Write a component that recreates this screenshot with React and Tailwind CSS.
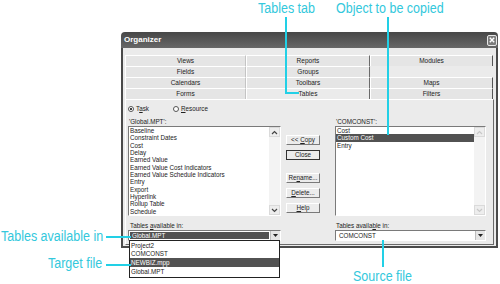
import React from 'react'

const TAB_ROWS = [
  ['Views', 'Reports', 'Modules'],
  ['Fields', 'Groups', null],
  ['Calendars', 'Toolbars', 'Maps'],
  ['Forms', 'Tables', 'Filters'],
]

const LEFT_ITEMS = [
  'Baseline',
  'Constraint Dates',
  'Cost',
  'Delay',
  'Earned Value',
  'Earned Value Cost Indicators',
  'Earned Value Schedule Indicators',
  'Entry',
  'Export',
  'Hyperlink',
  'Rollup Table',
  'Schedule',
]

const RIGHT_ITEMS = ['Cost', 'Custom Cost', 'Entry']

function Arrow({ up, faint }) {
  return (
    <svg width="7" height="5" viewBox="0 0 7 5">
      <path
        d={up ? 'M1 4 L3.5 1.5 L6 4' : 'M1 1 L3.5 3.5 L6 1'}
        fill="none"
        stroke={faint ? '#c8c8c8' : '#444'}
        strokeWidth="1.2"
      />
    </svg>
  )
}

function ScrollBar({ faint }) {
  return (
    <div className="w-[11px] h-full flex flex-col bg-[#f3f3f3]">
      <div className="h-[10px] flex items-center justify-center bg-[#ededed] border border-[#dadada]">
        <Arrow up faint={faint} />
      </div>
      <div className="flex-1" />
      <div className="h-[10px] flex items-center justify-center bg-[#ededed] border border-[#dadada]">
        <Arrow faint={faint} />
      </div>
    </div>
  )
}

function DropBtn() {
  return (
    <div className="w-[10px] h-full flex items-center justify-center bg-[#e6e6e6] border-l border-[#bdbdbd]">
      <svg width="5" height="3" viewBox="0 0 5 3">
        <path d="M0 0 H5 L2.5 3 Z" fill="#222" />
      </svg>
    </div>
  )
}

function Button({ children, dark }) {
  return (
    <div
      className={`h-[10px] flex items-center justify-center bg-[#ececec] text-[6.3px] text-[#222] whitespace-pre border ${
        dark ? 'border-[#333]' : 'border-t-white border-l-white border-b-[#7a7a7a] border-r-[#7a7a7a]'
      }`}
    >
      {children}
    </div>
  )
}

function Note({ className, children }) {
  return (
    <div
      className={`absolute text-[12.5px] leading-[13px] text-[#33c8dc] whitespace-nowrap origin-top-left scale-y-110 ${className}`}
    >
      {children}
    </div>
  )
}

export default function App() {
  return (
    <div className="relative w-[500px] h-[284px] bg-white overflow-hidden font-['Liberation_Sans',Arial,sans-serif]">
      {/* Dialog */}
      <div className="ml-[121px] pt-[32px] w-[377px]">
        <div className="h-[16px] rounded-t-[4px] bg-gradient-to-b from-[#474747] to-[#686868] flex items-center justify-between pl-[3px] pr-[1px]">
          <span className="text-white font-bold text-[8px] leading-none">Organizer</span>
          <div className="w-[10px] h-[11px] bg-[#7d7d7d] border border-[#e8e8e8] rounded-[2px] flex items-center justify-center">
            <svg width="6" height="6" viewBox="0 0 6 6">
              <path d="M0.8 0.8 L5.2 5.2 M5.2 0.8 L0.8 5.2" stroke="#fff" strokeWidth="1.4" />
            </svg>
          </div>
        </div>

        <div className="h-[200px] bg-[#ebebeb] border-x-2 border-b-2 border-[#4a4a4a] pl-[2px] pr-[2px] pt-[7px]">
          {/* Tabs */}
          <div className="mr-[1px]">
            {TAB_ROWS.map((row, r) => (
              <div key={r} className="grid grid-cols-[121px_124px_123px] h-[11px]">
                {row.map((t, c) =>
                  t ? (
                    <div
                      key={c}
                      className={`flex items-center justify-center text-[6.5px] text-[#222] border-t border-l border-t-white border-l-white ${
                        c === 2 ? 'border-r border-r-[#555]' : c === 1 ? 'border-r border-r-[#6a6a6a]' : 'border-r border-r-[#c4c4c4]'
                      } ${t === 'Tables' ? 'bg-[#ebebeb]' : 'bg-[#e5e5e5]'}`}
                    >
                      {t}
                    </div>
                  ) : (
                    <div key={c} />
                  )
                )}
              </div>
            ))}
          </div>

          {/* Panel */}
          <div className="h-[146px] border border-t-white border-l-white border-r-[#6a6a6a] border-b-[#6a6a6a] pl-[2px]">
            <div className="mt-[5px] h-[8px] flex items-center text-[6.3px] text-[#222]">
              <span className="w-[6px] h-[6px] rounded-full border border-[#555] bg-white flex items-center justify-center">
                <span className="w-[2px] h-[2px] rounded-full bg-black" />
              </span>
              <span className="ml-[2px]">
                T<span className="underline">a</span>sk
              </span>
              <span className="ml-[24px] w-[6px] h-[6px] rounded-full border border-[#555] bg-white" />
              <span className="ml-[2px]">
                <span className="underline">R</span>esource
              </span>
            </div>

            <div className="flex mt-[4px]">
              {/* Left column */}
              <div className="w-[153px]">
                <div className="h-[9px] flex items-center text-[6.3px] text-[#222] pl-[1px]">'Global.MPT':</div>
                <div className="h-[90px] bg-white border border-t-[#7a7a7a] border-l-[#7a7a7a] border-b-white border-r-white flex">
                  <div className="flex-1 pl-[1px] text-[6.3px] leading-[7.35px] text-[#222]">
                    {LEFT_ITEMS.map((it) => (
                      <div key={it} className="whitespace-nowrap">{it}</div>
                    ))}
                  </div>
                  <ScrollBar />
                </div>
                <div className="mt-[5px] h-[9px] flex items-center text-[6.3px] text-[#222] pl-[2px] whitespace-pre">
                  {'Tables '}<span className="underline">a</span>vailable in:
                </div>
                <div className="relative h-[11px] bg-white border border-t-[#7a7a7a] border-l-[#7a7a7a] border-b-white border-r-white flex">
                  <div className="flex-1 m-[1px] bg-[#525252] text-white text-[6.3px] flex items-center pl-[2px]">Global.MPT</div>
                  <DropBtn />
                  <div className="absolute left-0 top-full w-[151px] h-[38px] bg-white border border-[#222] text-[6.3px] text-[#222]">
                    <div className="h-[8.7px] flex items-center pl-[1px]">Project2</div>
                    <div className="h-[8.7px] flex items-center pl-[1px]">COMCONST</div>
                    <div className="h-[8.7px] flex items-center pl-[1px] bg-[#525252] text-white">NEWBIZ.mpp</div>
                    <div className="h-[8.7px] flex items-center pl-[1px]">Global.MPT</div>
                  </div>
                </div>
              </div>

              {/* Buttons */}
              <div className="ml-[5px] w-[34px] flex flex-col pt-[18px]">
                <Button>
                  {'<< '}<span className="underline">C</span>opy
                </Button>
                <div className="mt-[5px]">
                  <Button dark>Close</Button>
                </div>
                <div className="mt-[13px]">
                  <Button>
                    Re<span className="underline">n</span>ame...
                  </Button>
                </div>
                <div className="mt-[5px]">
                  <Button>
                    <span className="underline">D</span>elete...
                  </Button>
                </div>
                <div className="mt-[5px]">
                  <Button>
                    <span className="underline">H</span>elp
                  </Button>
                </div>
              </div>

              {/* Right column */}
              <div className="ml-[15px] w-[151px]">
                <div className="h-[9px] flex items-center text-[6.3px] text-[#222] pl-[1px]">'COMCONST':</div>
                <div className="h-[90px] bg-white border border-t-[#7a7a7a] border-l-[#7a7a7a] border-b-white border-r-white flex">
                  <div className="flex-1 text-[6.3px] leading-[7.35px] text-[#222]">
                    {RIGHT_ITEMS.map((it) => (
                      <div
                        key={it}
                        className={`whitespace-nowrap pl-[1px] ${it === 'Custom Cost' ? 'bg-[#525252] text-white' : ''}`}
                      >
                        {it}
                      </div>
                    ))}
                  </div>
                  <ScrollBar faint />
                </div>
                <div className="mt-[5px] h-[9px] flex items-center text-[6.3px] text-[#222] pl-[1px]">
                  Tables availa<span className="underline">b</span>le in:
                </div>
                <div className="h-[11px] bg-white border border-t-[#7a7a7a] border-l-[#7a7a7a] border-b-white border-r-white flex">
                  <div className="flex-1 text-[6.3px] text-[#222] flex items-center pl-[3px]">COMCONST</div>
                  <DropBtn />
                </div>
              </div>
            </div>
          </div>
        </div>
      </div>

      {/* Annotations */}
      <Note className="left-[258px] top-[2px]">Tables tab</Note>
      <Note className="left-[336px] top-[2px]">Object to be copied</Note>
      <Note className="left-[1px] top-[230px]">Tables available in</Note>
      <Note className="left-[48px] top-[257px]">Target file</Note>
      <Note className="left-[353px] top-[270px]">Source file</Note>

      <div className="absolute left-[285px] top-[17px] w-[2px] h-[77px] bg-[#22d0e6]" />
      <div className="absolute left-[285px] top-[92px] w-[14px] h-[2px] bg-[#22d0e6]" />
      <div className="absolute left-[387px] top-[17px] w-[2px] h-[118px] bg-[#22d0e6]" />
      <div className="absolute left-[106px] top-[236px] w-[25px] h-[2px] bg-[#22d0e6]" />
      <div className="absolute left-[106px] top-[264px] w-[25px] h-[2px] bg-[#22d0e6]" />
      <div className="absolute left-[382px] top-[240px] w-[2px] h-[27px] bg-[#22d0e6]" />
    </div>
  )
}
